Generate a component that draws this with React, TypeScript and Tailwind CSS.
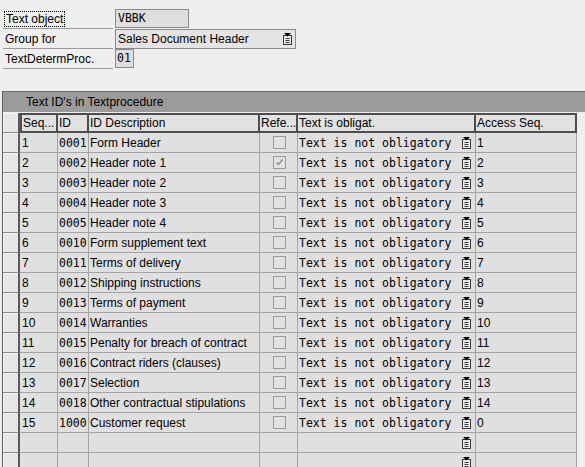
import React from "react";

const rows: [string, string, string, boolean, string][] = [
  ["1", "0001", "Form Header", false, "1"],
  ["2", "0002", "Header note 1", true, "2"],
  ["3", "0003", "Header note 2", false, "3"],
  ["4", "0004", "Header note 3", false, "4"],
  ["5", "0005", "Header note 4", false, "5"],
  ["6", "0010", "Form supplement text", false, "6"],
  ["7", "0011", "Terms of delivery", false, "7"],
  ["8", "0012", "Shipping instructions", false, "8"],
  ["9", "0013", "Terms of payment", false, "9"],
  ["10", "0014", "Warranties", false, "10"],
  ["11", "0015", "Penalty for breach of contract", false, "11"],
  ["12", "0016", "Contract riders (clauses)", false, "12"],
  ["13", "0017", "Selection", false, "13"],
  ["14", "0018", "Other contractual stipulations", false, "14"],
  ["15", "1000", "Customer request", false, "0"],
];

const mono = "font-['DejaVu_Sans_Mono','Liberation_Mono',monospace] text-[11.5px]";

function DropIcon() {
  return (
    <svg width="9" height="12" viewBox="0 0 9 12" className="shrink-0">
      <rect x="0.5" y="2.5" width="8" height="9" fill="#ececec" stroke="#3a3a3a" />
      <path d="M2.5 5.5h4M2.5 7.5h4M2.5 9.5h4" stroke="#3a3a3a" />
      <path d="M1 0h7l-3.5 3.5z" fill="#000" />
    </svg>
  );
}

function Checkbox({ checked }: { checked: boolean }) {
  return (
    <div className="ml-[1px] w-[13px] h-[13px] border border-[#9a9a9a] bg-[#e2e2e2] flex items-center justify-center">
      {checked && (
        <svg width="9" height="9" viewBox="0 0 9 9">
          <path d="M1.5 4.5l2 2 4-5" fill="none" stroke="#8c8c8c" strokeWidth="1.4" />
        </svg>
      )}
    </div>
  );
}

function Selector() {
  return (
    <div className="w-[17px] h-full bg-[#e6e6e6] border-r-2 border-b border-r-[#5a5a5a] border-b-[#8a8a8a] shadow-[inset_1px_1px_0_#f8f8f8]" />
  );
}

const cell = "h-full border-r border-b border-[#a3a3a3] bg-[#e0e0e0] flex items-center overflow-hidden whitespace-nowrap";

function DataRow({ r }: { r?: [string, string, string, boolean, string] }) {
  return (
    <div className="flex h-[20px] shrink-0">
      <Selector />
      <div className={`${cell} w-[38px] pl-[2px]`}>{r?.[0]}</div>
      <div className={`${cell} w-[31px] pl-[1px] ${mono}`}>{r?.[1]}</div>
      <div className={`${cell} w-[171px] pl-[1px]`}>{r?.[2]}</div>
      <div className={`${cell} w-[38px] justify-center`}>{r && <Checkbox checked={r[3]} />}</div>
      <div className={`${cell} w-[178px] pl-[1px] pr-[4px] justify-between ${mono}`}>
        <span>{r ? "Text is not obligatory" : ""}</span>
        <DropIcon />
      </div>
      <div className={`${cell} w-[101px] pl-[1px]`}>{r?.[4]}</div>
    </div>
  );
}

const hcell = "h-full border-t-2 border-b-2 border-r-2 border-[#4e4e4e] bg-[#e2e2e2] flex items-center overflow-hidden whitespace-nowrap pl-[1px]";

export default function App() {
  return (
    <div className="w-[585px] h-[467px] overflow-hidden bg-[#efefef] text-black text-[12px] leading-[20px] font-['Liberation_Sans',Arial,sans-serif]">
      <div className="pt-[9px] flex flex-col">
        <div className="flex h-[20px]">
          <div className="ml-[3px] w-[110px] h-[20px] border-b border-[#9a9a9a] flex items-start">
            <span className="ml-[1px] mt-[2px] px-[1px] leading-[14px] border border-dotted border-black">Text object</span>
          </div>
          <div className={`ml-[2px] w-[74px] h-[19px] border border-[#8a8a8a] bg-[#dedede] pl-[2px] leading-[17px] ${mono}`}>VBBK</div>
        </div>
        <div className="flex h-[20px]">
          <div className="ml-[3px] w-[110px] h-[20px] border-b border-[#9a9a9a] pl-[2px] leading-[20px]">Group for</div>
          <div className="ml-[2px] w-[181px] h-[20px] border border-[#8a8a8a] bg-[#e4e4e4] pl-[2px] pr-[3px] flex items-center justify-between leading-[18px]">
            <span>Sales Document Header</span>
            <DropIcon />
          </div>
        </div>
        <div className="flex h-[20px]">
          <div className="ml-[3px] w-[110px] h-[20px] border-b border-[#9a9a9a] pl-[2px] leading-[20px]">TextDetermProc.</div>
          <div className={`ml-[2px] w-[19px] h-[19px] border border-[#8a8a8a] bg-[#dedede] pl-[1px] leading-[17px] ${mono}`}>01</div>
        </div>
      </div>

      <div className="mt-[22px] ml-[2px] border-l border-[#5e5e5e] flex flex-col">
        <div className="h-[21px] bg-[#9b9b9b] border-t border-[#6a6a6a] pl-[23px] leading-[20px]">Text ID's in Textprocedure</div>
        <div className="flex h-[21px] pt-[1px]">
          <Selector />
          <div className={`${hcell} w-[38px] border-l-2`}>Seq...</div>
          <div className={`${hcell} w-[31px]`}>ID</div>
          <div className={`${hcell} w-[171px]`}>ID Description</div>
          <div className={`${hcell} w-[38px]`}>Refe...</div>
          <div className={`${hcell} w-[178px]`}>Text is obligat.</div>
          <div className={`${hcell} w-[101px]`}>Access Seq.</div>
        </div>
        {rows.map((r) => (
          <DataRow key={r[0]} r={r} />
        ))}
        <DataRow />
        <DataRow />
      </div>
    </div>
  );
}
